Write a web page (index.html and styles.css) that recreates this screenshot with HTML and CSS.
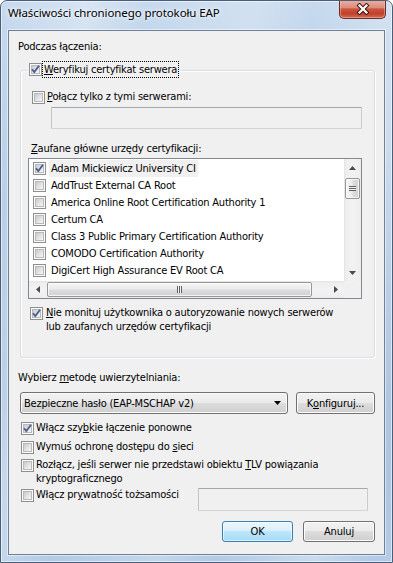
FILE: index.html
```html
<!DOCTYPE html>
<html lang="pl">
<head>
<meta charset="utf-8">
<title>Właściwości chronionego protokołu EAP</title>
<link rel="stylesheet" href="styles.css">
</head>
<body>
<div class="window">
  <div class="titlebar">
    <span class="title">Właściwości chronionego protokołu EAP</span>
    <div class="close">
      <svg width="14" height="12" viewBox="0 0 14 12"><path d="M3.5 2.5 L10.5 9.5 M10.5 2.5 L3.5 9.5" stroke="#3b1711" stroke-width="4.2" stroke-linecap="square"/><path d="M3.5 2.5 L10.5 9.5 M10.5 2.5 L3.5 9.5" stroke="#ffffff" stroke-width="2.2" stroke-linecap="square"/></svg>
    </div>
  </div>
  <div class="client">
    <div class="lbl lbl-top">Podczas łączenia:</div>
    <div class="group">
      <div class="legend">
        <span class="cb on"><svg class="tick" width="11" height="11" viewBox="0 0 11 11"><path d="M2 5.2 L4.3 8 L9 1.8" fill="none" stroke="#4a5d8e" stroke-width="1.8"/></svg></span>
        <span class="focus"><u>W</u>eryfikuj certyfikat serwera</span>
      </div>
      <div class="row r-connect"><span class="cb"></span><span class="txt"><u>P</u>ołącz tylko z tymi serwerami:</span></div>
      <div class="textbox tb-servers"></div>
      <div class="lbl lbl-list"><u>Z</u>aufane główne urzędy certyfikacji:</div>
      <div class="listbox">
        <div class="items">
          <div class="item"><span class="cb on"><svg class="tick" width="11" height="11" viewBox="0 0 11 11"><path d="M2 5.2 L4.3 8 L9 1.8" fill="none" stroke="#4a5d8e" stroke-width="1.8"/></svg></span><span class="itxt sel">Adam Mickiewicz University CI</span></div>
          <div class="item"><span class="cb"></span><span class="itxt">AddTrust External CA Root</span></div>
          <div class="item"><span class="cb"></span><span class="itxt">America Online Root Certification Authority 1</span></div>
          <div class="item"><span class="cb"></span><span class="itxt">Certum CA</span></div>
          <div class="item"><span class="cb"></span><span class="itxt">Class 3 Public Primary Certification Authority</span></div>
          <div class="item"><span class="cb"></span><span class="itxt">COMODO Certification Authority</span></div>
          <div class="item"><span class="cb"></span><span class="itxt">DigiCert High Assurance EV Root CA</span></div>
        </div>
        <div class="vscroll">
          <div class="sbtn"><svg width="7" height="4" viewBox="0 0 7 4"><path d="M0 4 L3.5 0 L7 4 Z" fill="#4a4a4a"/></svg></div>
          <div class="vthumb"><span class="grip-h"></span></div>
          <div class="sbtn sbtn-end"><svg width="7" height="4" viewBox="0 0 7 4"><path d="M0 0 L3.5 4 L7 0 Z" fill="#4a4a4a"/></svg></div>
        </div>
        <div class="hscroll">
          <div class="sbtn"><svg width="4" height="7" viewBox="0 0 4 7"><path d="M4 0 L0 3.5 L4 7 Z" fill="#4a4a4a"/></svg></div>
          <div class="hthumb"><span class="grip-v"></span></div>
          <div class="sbtn sbtn-end"><svg width="4" height="7" viewBox="0 0 4 7"><path d="M0 0 L4 3.5 L0 7 Z" fill="#4a4a4a"/></svg></div>
        </div>
        <div class="corner"></div>
      </div>
      <div class="row r-nomon"><span class="cb on"><svg class="tick" width="11" height="11" viewBox="0 0 11 11"><path d="M2 5.2 L4.3 8 L9 1.8" fill="none" stroke="#4a5d8e" stroke-width="1.8"/></svg></span><span class="txt"><u>N</u>ie monituj użytkownika o autoryzowanie nowych serwerów<br>lub zaufanych urzędów certyfikacji</span></div>
    </div>
    <div class="lbl lbl-method">Wybierz <u>m</u>etodę uwierzytelniania:</div>
    <div class="method-row">
      <div class="combo"><span>Bezpieczne hasło (EAP-MSCHAP v2)</span><svg width="7" height="4" viewBox="0 0 7 4"><path d="M0 0 L7 0 L3.5 4 Z" fill="#000"/></svg></div>
      <div class="btn btn-cfg">K<u>o</u>nfiguruj...</div>
    </div>
    <div class="row r-fast"><span class="cb on"><svg class="tick" width="11" height="11" viewBox="0 0 11 11"><path d="M2 5.2 L4.3 8 L9 1.8" fill="none" stroke="#4a5d8e" stroke-width="1.8"/></svg></span><span class="txt">Włącz szy<u>b</u>kie łączenie ponowne</span></div>
    <div class="row r-nap"><span class="cb"></span><span class="txt">Wymuś ochronę dostępu do <u>s</u>ieci</span></div>
    <div class="row r-tlv"><span class="cb"></span><span class="txt">Rozłącz, jeśli serwer nie przedstawi obiektu <u>T</u>LV powiązania<br>kryptograficznego</span></div>
    <div class="privacy-row">
      <div class="row r-priv"><span class="cb"></span><span class="txt">Włącz pr<u>y</u>watność tożsamości</span></div>
      <div class="textbox tb-priv"></div>
    </div>
    <div class="buttons">
      <div class="btn btn-ok">OK</div>
      <div class="btn btn-cancel">Anuluj</div>
    </div>
  </div>
</div>
</body>
</html>
```

FILE: styles.css
```css
* { box-sizing: border-box; }
html, body { margin: 0; padding: 0; }
body {
  width: 393px;
  height: 563px;
  overflow: hidden;
  font-family: "DejaVu Sans Condensed", "DejaVu Sans", sans-serif;
  font-stretch: condensed;
  font-size: 11px;
  letter-spacing: -0.2px;
  color: #000;
  background: #fff;
}
u { text-decoration: underline; text-underline-offset: 1px; }

.window {
  width: 393px;
  height: 563px;
  border: 1px solid #4b5e78;
  border-radius: 7px 7px 0 0;
  display: flex;
  flex-direction: column;
  background:
    linear-gradient(100deg, rgba(255,255,255,0) 0%, rgba(255,255,255,.3) 18%, rgba(255,255,255,0) 30%, rgba(255,255,255,.22) 52%, rgba(255,255,255,0) 64%, rgba(255,255,255,.3) 84%, rgba(255,255,255,0) 96%),
    linear-gradient(to bottom, #c6d9ee 0%, #b1c9e3 35%, #a8c2de 70%, #b3cbe4 100%);
  box-shadow: inset 0 0 0 1px rgba(255,255,255,.55);
  overflow: hidden;
}

.titlebar {
  height: 29px;
  display: flex;
  align-items: flex-start;
  flex: none;
}
.title {
  font-family: "Noto Sans", sans-serif;
  font-stretch: normal;
  font-size: 11.5px;
  letter-spacing: -0.1px;
  line-height: 16px;
  padding: 4px 0 0 7px;
  white-space: nowrap;
  text-shadow: 0 0 6px #fff, 0 0 3px rgba(255,255,255,.9);
}
.close {
  margin: -1px 6px 0 auto;
  width: 47px;
  height: 19px;
  border: 1px solid #6b2c24;
  border-top: none;
  border-radius: 0 0 5px 5px;
  background: linear-gradient(to bottom, #eab0a2 0%, #dd8d7c 42%, #c9563f 50%, #c2412b 75%, #d46a52 100%);
  box-shadow: inset 0 0 0 1px rgba(255,205,195,.45);
  display: flex;
  align-items: center;
  justify-content: center;
}

.client {
  margin: 0 7px;
  height: 525px;
  flex: none;
  border: 1px solid #6f8198;
  background: #f0f0f0;
  box-shadow: 0 0 0 1px rgba(255,255,255,.5);
  display: flex;
  flex-direction: column;
  align-items: flex-start;
}

.lbl { line-height: 14px; white-space: nowrap; }
.lbl-top { margin: 9px 0 0 9px; }

.group {
  margin: 16px 0 0 11px;
  width: 355px;
  height: 288px;
  border: 1px solid #d5dfe5;
  border-radius: 3px;
  box-shadow: inset 1px 1px 0 #fff, 1px 1px 0 #fff;
  display: flex;
  flex-direction: column;
  align-items: flex-start;
}
.legend {
  margin: -10px 0 0 6px;
  padding: 0 1px 0 2px;
  height: 17px;
  background: #f0f0f0;
  display: flex;
  align-items: center;
}
.focus {
  border: 1px dotted #000;
  padding: 0 1px;
  line-height: 15px;
  white-space: nowrap;
}

.cb {
  position: relative;
  flex: none;
  width: 13px;
  height: 13px;
  border: 1px solid #8e8f8f;
  background: #f4f4f4;
}
.cb::before {
  content: "";
  position: absolute;
  left: 1px; top: 1px; right: 1px; bottom: 1px;
  background: linear-gradient(135deg, #c8c9cb 0%, #dedfe1 45%, #f7f7f7 100%);
  border: 1px solid #b9babc;
  box-shadow: 0 0 0 1px #fafafa;
}
.cb .tick {
  position: absolute;
  left: 0; top: 0;
}

.row {
  display: flex;
  align-items: flex-start;
  line-height: 14px;
  white-space: nowrap;
}
.row .cb { margin-top: 1px; }
.row .txt { margin-left: 2px; }

.r-connect { margin: 12px 0 0 11px; }
.r-connect .txt { margin-left: 2px; }
.textbox {
  height: 22px;
  border: 1px solid #abadb3;
  border-color: #a4a7ad #c9cbd0 #d0d3d8 #c2c4c9;
  border-radius: 1px;
  background: #f0f0f0;
}
.tb-servers { margin: 3px 0 0 30px; width: 311px; }
.lbl-list { margin: 13px 0 0 10px; }

.listbox {
  margin: 2px 0 0 7px;
  width: 334px;
  height: 141px;
  border: 1px solid #828790;
  background: #fff;
  display: grid;
  grid-template-columns: 1fr 17px;
  grid-template-rows: 1fr 17px;
}
.items {
  overflow: hidden;
  padding: 1px 0 0 4px;
}
.item {
  height: 17px;
  display: flex;
  align-items: center;
  white-space: nowrap;
}
.itxt {
  margin-left: 3px;
  padding: 0 2px;
  line-height: 17px;
}
.itxt.sel { background: #f0f0f0; }

.vscroll, .hscroll {
  display: flex;
  background: #f0f0f0;
}
.vscroll {
  flex-direction: column;
  background: linear-gradient(to right, #e3e3e3 0, #eeeeee 2px, #f2f2f2 50%, #eeeeee calc(100% - 1px), #e6e6e6 100%);
}
.hscroll {
  flex-direction: row;
  background: linear-gradient(to bottom, #e3e3e3 0, #eeeeee 2px, #f2f2f2 50%, #eeeeee calc(100% - 1px), #e6e6e6 100%);
}
.sbtn {
  flex: none;
  width: 17px;
  height: 17px;
  display: flex;
  align-items: center;
  justify-content: center;
}
.sbtn-end { margin: auto 0 0 0; }
.hscroll .sbtn-end { margin: 0 0 0 auto; }
.vthumb {
  margin: 2px 1px 0;
  height: 21px;
  border: 1px solid #979797;
  border-radius: 2px;
  background: linear-gradient(to right, #f5f5f5 0%, #ececec 45%, #dcdcdc 55%, #d2d2d2 100%);
  box-shadow: inset 0 0 0 1px rgba(255,255,255,.7);
  display: flex;
  align-items: center;
  justify-content: center;
}
.hthumb {
  margin: 1px 0 1px 1px;
  width: 265px;
  height: 15px;
  border: 1px solid #979797;
  border-radius: 2px;
  background: linear-gradient(to bottom, #f5f5f5 0%, #ececec 45%, #dcdcdc 55%, #d2d2d2 100%);
  box-shadow: inset 0 0 0 1px rgba(255,255,255,.7);
  display: flex;
  align-items: center;
  justify-content: center;
}
.grip-h {
  width: 7px;
  height: 5px;
  background: repeating-linear-gradient(to bottom, #5f5f5f 0 1px, #f4f4f4 1px 2px);
}
.grip-v {
  width: 5px;
  height: 7px;
  background: repeating-linear-gradient(to right, #5f5f5f 0 1px, #f4f4f4 1px 2px);
}
.corner { background: #f0f0f0; }

.r-nomon { margin: 7px 0 0 9px; }
.r-nomon .txt { margin-left: 3px; }

.lbl-method { margin: 13px 0 0 9px; }
.method-row {
  margin: 7px 0 0 11px;
  display: flex;
  align-items: flex-start;
}
.combo {
  width: 268px;
  height: 22px;
  border: 1px solid #707070;
  border-radius: 3px;
  background: linear-gradient(to bottom, #f2f2f2 0%, #ebebeb 50%, #dddddd 50%, #cfcfcf 100%);
  box-shadow: inset 0 0 0 1px #fcfcfc;
  display: flex;
  align-items: center;
  justify-content: space-between;
  padding: 0 6px 0 3px;
  white-space: nowrap;
}
.btn {
  height: 22px;
  border: 1px solid #707070;
  border-radius: 3px;
  background: linear-gradient(to bottom, #f2f2f2 0%, #ebebeb 50%, #dddddd 50%, #cfcfcf 100%);
  box-shadow: inset 0 0 0 1px #fcfcfc;
  display: flex;
  align-items: center;
  justify-content: center;
  white-space: nowrap;
}
.btn-cfg { margin-left: 8px; width: 79px; }

.r-fast { margin: 7px 0 0 12px; }
.r-nap { margin: 5px 0 0 12px; }
.r-tlv { margin: 4px 0 0 12px; }
.privacy-row {
  margin-top: 2px;
  width: 100%;
  display: flex;
  align-items: flex-start;
}
.r-priv { margin-left: 12px; }
.tb-priv { margin: 0 16px 0 auto; width: 170px; height: 23px; }

.buttons {
  margin-top: 10px;
  width: 100%;
  display: flex;
  justify-content: flex-end;
  gap: 10px;
  padding-right: 9px;
}
.btn-ok {
  width: 71px;
  height: 21px;
  border-color: #3c7fb1;
  background: linear-gradient(to bottom, #eaf6fd 0%, #d9f0fc 50%, #bee6fd 50%, #a7d9f5 100%);
  box-shadow: inset 0 0 0 1px rgba(255,255,255,.6);
}
.btn-cancel { width: 72px; height: 21px; }
```
